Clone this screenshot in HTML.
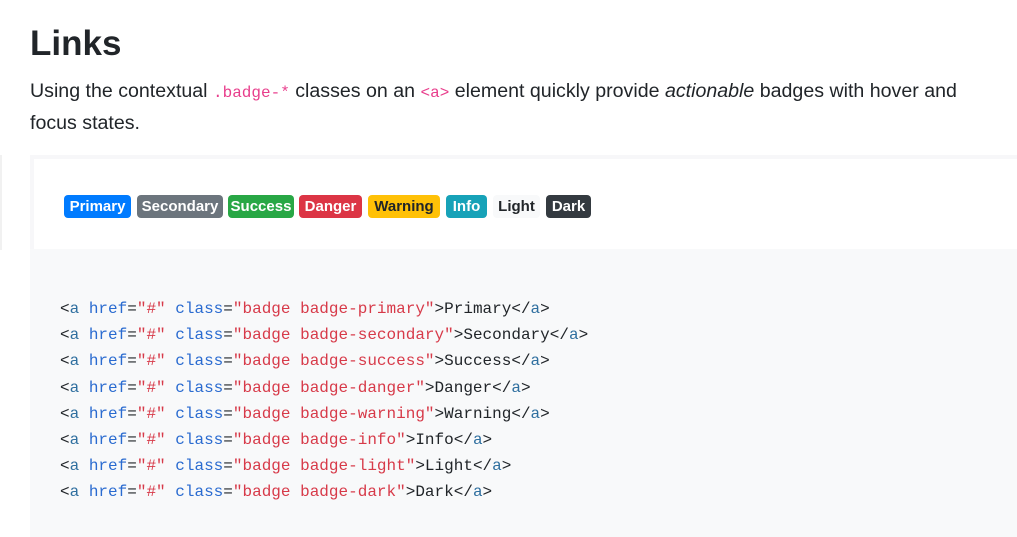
<!DOCTYPE html>
<html><head><meta charset="utf-8"><style>
html,body{margin:0;padding:0;background:#fff;width:1017px;height:537px;overflow:hidden;font-family:"Liberation Sans",sans-serif;color:#212529}
h2{position:absolute;left:30px;top:19px;margin:0;font-size:35px;font-weight:bold;line-height:50px;color:#212529}
p{position:absolute;left:30px;top:76px;margin:0;font-size:19.6px;line-height:30px;white-space:nowrap;color:#212529}
p code{font-family:"Liberation Mono",monospace;font-size:16px;color:#e83e8c}
.ex{position:absolute;left:30px;top:155px;width:1000px;height:94px;border:4px solid #f7f7f9;border-right:none;border-bottom:none;box-sizing:border-box;background:#fff}
.lline{position:absolute;left:0;top:155px;width:2px;height:95px;background:#f1f1f1}
.b{position:absolute;top:0;height:23px;line-height:24px;border-radius:4px;font-weight:bold;font-size:15px;text-align:center;color:#fff}
.code{position:absolute;left:30px;top:249px;width:987px;height:288px;background:#f8f9fa}
pre{position:absolute;left:60px;top:296px;margin:0;font-family:"Liberation Mono",monospace;font-size:16px;line-height:26.2px;color:#212529}
.t{color:#2f6f9f}.at{color:#2a6bd0}.s{color:#d73a49}
</style></head><body>
<h2>Links</h2>
<p>Using the contextual <code>.badge-*</code> classes on an <code>&lt;a&gt;</code> element quickly provide <i>actionable</i> badges with hover and<br>focus states.</p>
<div class="lline"></div>
<div class="ex"></div>
<div class="b" style="left:64px;top:195px;width:67px;background:#007bff">Primary</div>
<div class="b" style="left:137px;top:195px;width:86px;background:#6c757d">Secondary</div>
<div class="b" style="left:228px;top:195px;width:66px;background:#28a745">Success</div>
<div class="b" style="left:299px;top:195px;width:63px;background:#dc3545">Danger</div>
<div class="b" style="left:368px;top:195px;width:72px;background:#ffc107;color:#212529">Warning</div>
<div class="b" style="left:446px;top:195px;width:41px;background:#17a2b8">Info</div>
<div class="b" style="left:493px;top:195px;width:47px;background:#f8f9fa;color:#212529">Light</div>
<div class="b" style="left:546px;top:195px;width:45px;background:#343a40">Dark</div>
<div class="code"></div>
<pre>&lt;<span class="t">a</span> <span class="at">href</span>=<span class="s">"#"</span> <span class="at">class</span>=<span class="s">"badge badge-primary"</span>&gt;Primary&lt;/<span class="t">a</span>&gt;
&lt;<span class="t">a</span> <span class="at">href</span>=<span class="s">"#"</span> <span class="at">class</span>=<span class="s">"badge badge-secondary"</span>&gt;Secondary&lt;/<span class="t">a</span>&gt;
&lt;<span class="t">a</span> <span class="at">href</span>=<span class="s">"#"</span> <span class="at">class</span>=<span class="s">"badge badge-success"</span>&gt;Success&lt;/<span class="t">a</span>&gt;
&lt;<span class="t">a</span> <span class="at">href</span>=<span class="s">"#"</span> <span class="at">class</span>=<span class="s">"badge badge-danger"</span>&gt;Danger&lt;/<span class="t">a</span>&gt;
&lt;<span class="t">a</span> <span class="at">href</span>=<span class="s">"#"</span> <span class="at">class</span>=<span class="s">"badge badge-warning"</span>&gt;Warning&lt;/<span class="t">a</span>&gt;
&lt;<span class="t">a</span> <span class="at">href</span>=<span class="s">"#"</span> <span class="at">class</span>=<span class="s">"badge badge-info"</span>&gt;Info&lt;/<span class="t">a</span>&gt;
&lt;<span class="t">a</span> <span class="at">href</span>=<span class="s">"#"</span> <span class="at">class</span>=<span class="s">"badge badge-light"</span>&gt;Light&lt;/<span class="t">a</span>&gt;
&lt;<span class="t">a</span> <span class="at">href</span>=<span class="s">"#"</span> <span class="at">class</span>=<span class="s">"badge badge-dark"</span>&gt;Dark&lt;/<span class="t">a</span>&gt;</pre>
</body></html>
